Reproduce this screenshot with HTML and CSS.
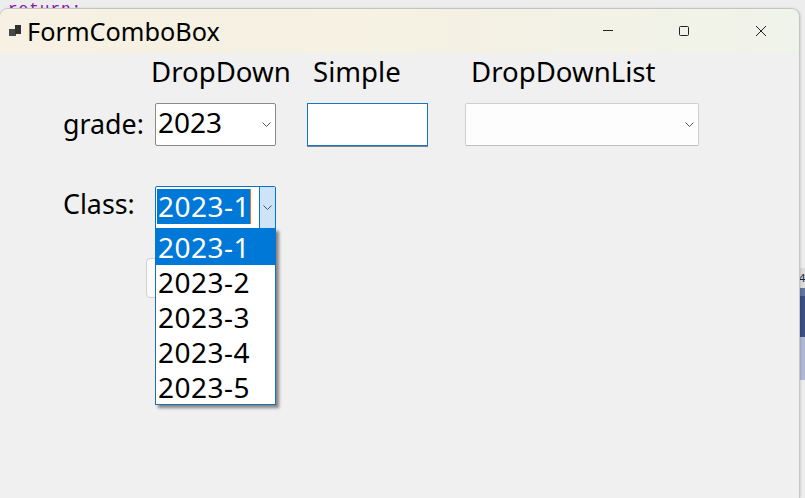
FILE: index.html
```html
<!DOCTYPE html>
<html lang="en">
<head>
<meta charset="utf-8">
<title>FormComboBox</title>
<link rel="stylesheet" href="styles.css">
</head>
<body>
<div class="behind">
  <div class="code">return;</div>
  <div class="side">
    <div class="side-num">4</div>
    <div class="side-mid"></div>
    <div class="side-dark"></div>
    <div class="side-light"></div>
  </div>
</div>
<main class="window">
  <header class="titlebar">
    <svg class="app-icon" width="13" height="12" viewBox="0 0 13 12"><rect x="0" y="4" width="7" height="7" fill="#484848"/><rect x="6" y="0" width="6" height="9" fill="#303030"/></svg>
    <span class="title">FormComboBox</span>
    <div class="caption">
      <svg class="cap" width="12" height="12" viewBox="0 0 12 12"><path d="M2 5.5H12" stroke="#222" stroke-width="1" fill="none"/></svg>
      <svg class="cap" width="12" height="12" viewBox="0 0 12 12"><rect x="1.5" y="1.5" width="9" height="9" rx="1" stroke="#222" stroke-width="1" fill="none"/></svg>
      <svg class="cap" width="12" height="12" viewBox="0 0 12 12"><path d="M1 1L11 11M11 1L1 11" stroke="#222" stroke-width="1" fill="none"/></svg>
    </div>
  </header>
  <section class="form">
    <div class="row-head">
      <span class="head head-a">DropDown</span>
      <span class="head head-b">Simple</span>
      <span class="head head-c">DropDownList</span>
    </div>
    <div class="row row-grade">
      <label class="field-label">grade:</label>
      <div class="combo">
        <span class="combo-text">2023</span>
        <svg class="chev" width="9" height="5" viewBox="0 0 9 5"><path d="M.5.5L4.5 4.5L8.5.5" stroke="#555" fill="none"/></svg>
      </div>
      <div class="simple"></div>
      <div class="combo combo-list">
        <svg class="chev" width="9" height="5" viewBox="0 0 9 5"><path d="M.5.5L4.5 4.5L8.5.5" stroke="#555" fill="none"/></svg>
      </div>
    </div>
    <div class="row row-class">
      <label class="field-label field-label-class">Class:</label>
      <div class="combo-open">
        <div class="edit"><span class="sel">2023-1</span></div>
        <div class="drop-btn"><svg class="chev-open" width="9" height="5" viewBox="0 0 9 5"><path d="M.5.5L4.5 4.5L8.5.5" stroke="#555" fill="none"/></svg></div>
        <ul class="list">
          <li class="item item-on">2023-1</li>
          <li class="item">2023-2</li>
          <li class="item">2023-3</li>
          <li class="item">2023-4</li>
          <li class="item">2023-5</li>
        </ul>
      </div>
    </div>
    <div class="button"></div>
  </section>
</main>
</body>
</html>
```
FILE: styles.css
```css
* { box-sizing: border-box; }
html, body { margin: 0; padding: 0; }
body {
  width: 805px;
  height: 498px;
  overflow: hidden;
  position: relative;
  background: #ededed;
  font-family: "Noto Sans", "Open Sans", sans-serif;
  color: #000;
}
.behind { position: absolute; inset: 0; }
.code {
  position: absolute;
  left: 8px;
  top: 1px;
  height: 7px;
  overflow: hidden;
  font: 16px/18px "Liberation Mono", monospace;
  color: #8a10b0;
  letter-spacing: 1px;
}
.side {
  position: absolute;
  right: 0;
  top: 268px;
  width: 6px;
  display: flex;
  flex-direction: column;
}
.side-num { height: 20px; background: #dcdcdc; font-size: 11px; line-height: 20px; overflow: hidden; color: #223; }
.side-mid { height: 8px; background: #6273a0; }
.side-dark { height: 41px; background: #3c4f85; }
.side-light { height: 43px; background: #b0b8d4; }
.window {
  position: absolute;
  left: 0;
  top: 9px;
  width: 799px;
  height: 489px;
  background: #f0f0f0;
  border-radius: 8px 8px 0 0;
  box-shadow: 0 0 0 1px #c4c4c4, 1px 0 3px rgba(0,0,0,.25);
  display: flex;
  flex-direction: column;
}
.titlebar {
  height: 44px;
  flex: none;
  display: flex;
  align-items: center;
  padding-left: 9px;
  border-radius: 8px 8px 0 0;
  background: linear-gradient(90deg, #f6f1e2 0%, #f5f1e3 50%, #f0f3ea 100%);
}
.app-icon { flex: none; margin-right: 6px; }
.title { font-size: 25.3px; line-height: 44px; margin-left: -1px; }
.caption {
  margin-left: auto;
  display: flex;
  align-items: center;
  gap: 65px;
  padding-right: 32px;
}
.form { flex: 1; position: relative; }
.row-head {
  display: flex;
  height: 50px;
  font-size: 27.6px;
  line-height: 38px;
}
.head { display: block; margin-top: -1px; }
.head-a { margin-left: 151px; width: 162px; }
.head-b { width: 158px; }
.row { display: flex; }
.row-grade { height: 83px; align-items: flex-start; }
.field-label {
  width: 155px;
  padding-left: 63px;
  font-size: 26.8px;
  line-height: 41px;
  flex: none;
}
.field-label-class { line-height: 35px; }
.combo {
  width: 121px;
  height: 43px;
  background: #fff;
  border: 1px solid #8a8a8a;
  border-radius: 2px;
  display: flex;
  align-items: center;
  padding: 0 4px 0 2px;
  font-size: 28px;
  flex: none;
}
.combo-text { flex: 1; padding-bottom: 5px; }
.simple {
  width: 121px;
  height: 43px;
  margin-left: 31px;
  background: #fff;
  border: 1px solid #1a75c4;
  box-shadow: 0 1px 0 #7f8288;
  flex: none;
}
.combo-list {
  width: 234px;
  margin-left: 37px;
  background: #fdfdfd;
  border-color: #cfcfcf;
  border-bottom-color: #bdbdbd;
  justify-content: flex-end;
}
.combo-open {
  position: relative;
  width: 121px;
  height: 43px;
  display: flex;
  flex: none;
  border: 1px solid #0a70c8;
  border-radius: 2px 2px 0 0;
  background: #fff;
}
.edit { flex: 1; padding: 2px 0 0 1px; }
.sel {
  display: block;
  width: 94px;
  height: 35px;
  background: #0078d7;
  color: #fff;
  font-size: 28px;
  line-height: 34px;
  letter-spacing: .5px;
  white-space: nowrap;
  padding-left: 1px;
  border-right: 1px solid #e07a1a;
}
.drop-btn {
  width: 16px;
  flex: none;
  background: #cce4f7;
  border-left: 1px solid #0a70c8;
  display: flex;
  align-items: center;
  justify-content: center;
}
.list {
  position: absolute;
  left: -1px;
  top: 41px;
  width: 121px;
  height: 177px;
  margin: 0;
  padding: 0;
  list-style: none;
  background: #fff;
  border: 1px solid #1a6fb8;
  border-top: 0;
  box-shadow: 3px 3px 3px rgba(0,0,0,.45);
  z-index: 2;
}
.item {
  height: 35px;
  padding-left: 2px;
  font-size: 28px;
  line-height: 35px;
  letter-spacing: .5px;
}
.item-on { height: 37px; padding-top: 2px; background: #0078d7; color: #fff; }
.button {
  position: absolute;
  left: 146px;
  top: 205px;
  width: 120px;
  height: 40px;
  background: #fbfbfb;
  border: 1px solid #d0d0d0;
  border-radius: 4px;
}
```
